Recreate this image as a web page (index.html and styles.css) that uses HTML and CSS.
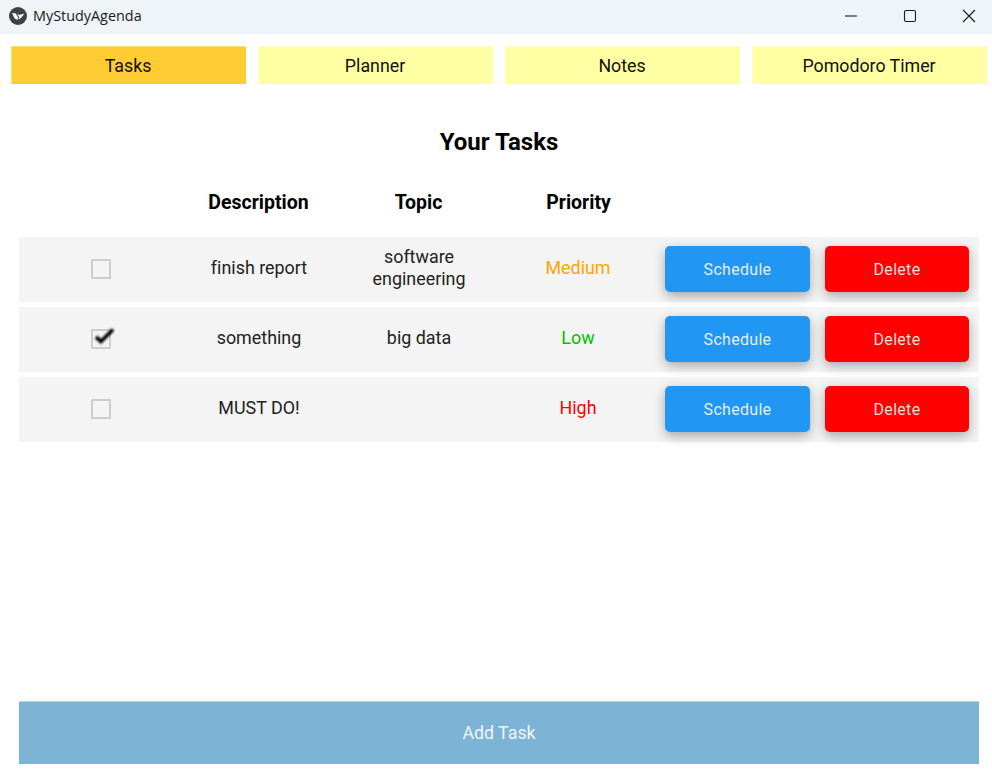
FILE: index.html
```html
<!DOCTYPE html>
<html lang="en">
<head>
<meta charset="utf-8">
<title>MyStudyAgenda</title>
<link rel="stylesheet" href="styles.css">
</head>
<body>
<div class="window">
  <header class="titlebar">
    <svg class="logo" viewBox="0 0 18 18" width="18" height="18" aria-hidden="true">
      <circle cx="9" cy="9" r="9" fill="#3f4143"/>
      <path d="M3 6 L6.8 6.4 L9 10.4 L8.6 13 L5.6 11.6 Z" fill="#fff"/>
      <path d="M8.2 6.4 L10.4 8 L15.4 6.6 L12.4 10.6 L9.8 12.4 L9.8 9.4 Z" fill="#fff"/>
    </svg>
    <span class="app-name">MyStudyAgenda</span>
    <div class="win-controls">
      <svg class="win-icon" viewBox="0 0 14 14" width="14" height="14" aria-hidden="true"><path d="M1 7H13" stroke="#1a1a1a" stroke-width="1.1" fill="none"/></svg>
      <svg class="win-icon" viewBox="0 0 14 14" width="14" height="14" aria-hidden="true"><rect x="1.5" y="1.5" width="11" height="11" rx="1.5" stroke="#1a1a1a" stroke-width="1.1" fill="none"/></svg>
      <svg class="win-icon" viewBox="0 0 14 14" width="14" height="14" aria-hidden="true"><path d="M1 1L13 13M13 1L1 13" stroke="#1a1a1a" stroke-width="1.1" fill="none"/></svg>
    </div>
  </header>

  <nav class="tabs">
    <div class="tab active">Tasks</div>
    <div class="tab">Planner</div>
    <div class="tab">Notes</div>
    <div class="tab">Pomodoro Timer</div>
  </nav>

  <main class="content">
    <h1 class="heading">Your Tasks</h1>
    <div class="columns">
      <div></div>
      <div>Description</div>
      <div>Topic</div>
      <div>Priority</div>
    </div>

    <section class="rows">
      <div class="row">
        <div class="cell"><span class="checkbox"></span></div>
        <div class="cell">finish report</div>
        <div class="cell">software<br>engineering</div>
        <div class="cell medium">Medium</div>
        <div class="actions"><span class="btn schedule">Schedule</span><span class="btn delete">Delete</span></div>
      </div>
      <div class="row">
        <div class="cell">
          <span class="checkbox">
            <svg class="tick" viewBox="0 0 24 20" width="24" height="20" aria-hidden="true"><path d="M4 11 L9 15.5 L21 3.5" fill="none" stroke="#000" stroke-width="3.8"/></svg>
          </span>
        </div>
        <div class="cell">something</div>
        <div class="cell">big data</div>
        <div class="cell low">Low</div>
        <div class="actions"><span class="btn schedule">Schedule</span><span class="btn delete">Delete</span></div>
      </div>
      <div class="row">
        <div class="cell"><span class="checkbox"></span></div>
        <div class="cell">MUST DO!</div>
        <div class="cell"></div>
        <div class="cell high">High</div>
        <div class="actions"><span class="btn schedule">Schedule</span><span class="btn delete">Delete</span></div>
      </div>
    </section>

    <div class="add-task">Add Task</div>
  </main>
</div>
</body>
</html>
```

FILE: styles.css
```css
* {
  box-sizing: border-box;
}

html,
body {
  margin: 0;
  height: 100%;
  background: #fff;
  overflow: hidden;
}

body {
  font-family: Roboto, "Liberation Sans", sans-serif;
  font-variant-ligatures: none;
  color: #000;
}

.window {
  display: flex;
  flex-direction: column;
  height: 773px;
  width: 992px;
}

.titlebar {
  display: flex;
  align-items: center;
  flex: 0 0 34px;
  height: 34px;
  padding: 0 0 2px 9px;
  background: #eff4f9;
}

.logo {
  flex: none;
}

.app-name {
  margin: -2px 0 0 6px;
  font-family: "Open Sans", "Noto Sans", sans-serif;
  font-size: 14.4px;
  color: #1a1a1a;
}

.win-controls {
  display: flex;
  align-items: center;
  gap: 45px;
  margin-left: auto;
  padding-right: 16px;
}

.win-icon {
  display: block;
}

.tabs {
  display: flex;
  gap: 12px;
  padding: 12px 5px 0 11px;
}

.tab {
  flex: 1 1 0;
  height: 38px;
  display: flex;
  align-items: center;
  justify-content: center;
  padding-right: 2px;
  background: #ffffa3;
  border-top: 1px solid #ffffc4;
  border-left: 1px solid #ffffc4;
  font-size: 17.8px;
  color: #111;
}

.tab.active {
  background: #ffcc33;
  border-color: #ffdc78;
}

.content {
  flex: 1;
  display: flex;
  flex-direction: column;
  padding: 0 13px 9px 19px;
}

.heading {
  margin: 43px 0 0;
  height: 30px;
  line-height: 30px;
  font-size: 24px;
  font-weight: 700;
  text-align: center;
}

.columns {
  display: grid;
  grid-template-columns: 160px 160px 160px 160px 320px;
  margin-top: 31px;
  height: 29px;
  line-height: 29px;
  padding-right: 0;
  font-size: 19.5px;
  font-weight: 700;
  text-align: center;
}

.columns div {
  padding-right: 1px;
}

.rows {
  display: flex;
  flex-direction: column;
  gap: 5px;
  margin-top: 20px;
}

.row {
  display: grid;
  grid-template-columns: 160px 160px 160px 160px 320px;
  height: 65px;
  background: #f4f4f4;
  font-size: 17.9px;
  line-height: 22px;
  color: #222;
}

.cell {
  display: flex;
  align-items: center;
  justify-content: center;
  text-align: center;
  padding-bottom: 3px;
}

.medium {
  padding-right: 2px;
  color: #ffa500;
}

.low {
  padding-right: 2px;
  color: #00c000;
}

.high {
  padding-right: 2px;
  color: #ff0000;
}

.checkbox {
  position: relative;
  display: block;
  width: 20px;
  height: 20px;
  margin: 2px 0 0 3px;
  border: 2px solid #cdcdcd;
  border-radius: 1px;
}

.tick {
  position: absolute;
  left: -1px;
  top: -5px;
  filter: blur(0.9px);
}

.actions {
  display: grid;
  grid-template-columns: 145px 144px;
  gap: 15px;
  padding: 9px 0 0 6px;
}

.btn {
  height: 46px;
  display: flex;
  align-items: center;
  justify-content: center;
  padding-top: 2px;
  border-radius: 5px;
  font-size: 16px;
  letter-spacing: 0.3px;
  color: rgba(255, 255, 255, 0.88);
  box-shadow: 0 4px 12px rgba(0, 0, 0, 0.32);
}

.schedule {
  background: #2196f3;
}

.delete {
  background: #ff0000;
}

.add-task {
  margin-top: auto;
  height: 63px;
  display: flex;
  align-items: center;
  justify-content: center;
  padding-bottom: 2px;
  background: #7db4d6;
  border-top: 1px solid #b2d2e6;
  font-size: 17.8px;
  color: rgba(255, 255, 255, 0.9);
}
```
